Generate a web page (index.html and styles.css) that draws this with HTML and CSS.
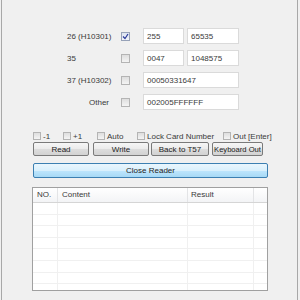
FILE: index.html
```html
<!DOCTYPE html>
<html lang="en">
<head>
  <meta charset="UTF-8" />
  <title>Card Reader</title>
  <link rel="stylesheet" href="styles.css">
</head>
<body>
  <div class="window">

    <div class="form">
      <div class="row">
        <span class="label">26 (H10301)</span>
        <span class="check checked">
          <svg width="7" height="7" viewBox="0 0 7 7"><polyline points="1,3.5 3,5.5 6,1" fill="none" stroke="#2a3a9a" stroke-width="1.2"/></svg>
        </span>
        <span class="field short">255</span>
        <span class="field long">65535</span>
      </div>
      <div class="row">
        <span class="label">35</span>
        <span class="check"></span>
        <span class="field short">0047</span>
        <span class="field long">1048575</span>
      </div>
      <div class="row">
        <span class="label">37 (H10302)</span>
        <span class="check"></span>
        <span class="field wide">00050331647</span>
      </div>
      <div class="row">
        <span class="label other">Other</span>
        <span class="check"></span>
        <span class="field wide">002005FFFFFF</span>
      </div>
    </div>

    <div class="options">
      <label class="opt opt-m1"><span class="check small"></span>-1</label>
      <label class="opt opt-p1"><span class="check small"></span>+1</label>
      <label class="opt opt-auto"><span class="check small"></span>Auto</label>
      <label class="opt opt-lock"><span class="check small"></span>Lock Card Number</label>
      <label class="opt"><span class="check small"></span>Out [Enter]</label>
    </div>

    <div class="buttons">
      <button class="btn btn-read">Read</button>
      <button class="btn btn-write">Write</button>
      <button class="btn btn-back">Back to T57</button>
      <button class="btn btn-kbd">Keyboard Out</button>
    </div>

    <button class="btn-close">Close Reader</button>

    <div class="list">
      <div class="list-head">
        <span class="col col-no">NO.</span>
        <span class="col col-content">Content</span>
        <span class="col col-result">Result</span>
        <span class="col col-end"></span>
      </div>
      <div class="list-body">
        <div class="list-row"><span class="col col-no"></span><span class="col col-content"></span><span class="col col-result"></span><span class="col col-end"></span></div>
        <div class="list-row"><span class="col col-no"></span><span class="col col-content"></span><span class="col col-result"></span><span class="col col-end"></span></div>
        <div class="list-row"><span class="col col-no"></span><span class="col col-content"></span><span class="col col-result"></span><span class="col col-end"></span></div>
        <div class="list-row"><span class="col col-no"></span><span class="col col-content"></span><span class="col col-result"></span><span class="col col-end"></span></div>
        <div class="list-row"><span class="col col-no"></span><span class="col col-content"></span><span class="col col-result"></span><span class="col col-end"></span></div>
        <div class="list-row"><span class="col col-no"></span><span class="col col-content"></span><span class="col col-result"></span><span class="col col-end"></span></div>
        <div class="list-row"><span class="col col-no"></span><span class="col col-content"></span><span class="col col-result"></span><span class="col col-end"></span></div>
        <div class="list-row"><span class="col col-no"></span><span class="col col-content"></span><span class="col col-result"></span><span class="col col-end"></span></div>
      </div>
    </div>

  </div>
</body>
</html>
```

FILE: styles.css
```css
* {
  box-sizing: border-box;
}
html, body {
  margin: 0;
  height: 100%;
  background: #f0f0f0;
}
body {
  font-family: "Liberation Sans", Arial, sans-serif;
  font-size: 8px;
  color: #3a3a3a;
  overflow: hidden;
}
.window {
  margin-left: 1px;
  width: 297px;
  height: 300px;
  border-left: 1px solid #a8a8a8;
  border-right: 1px solid #a8a8a8;
  display: flex;
  flex-direction: column;
}

/* format rows */
.form {
  padding: 28px 0 0 65px;
}
.row {
  display: flex;
  align-items: center;
  height: 16px;
  margin-bottom: 6px;
}
.label {
  width: 54px;
}
.label.other {
  padding-left: 22px;
}
.check {
  width: 9px;
  height: 9px;
  border: 1px solid #b4b4b4;
  background: linear-gradient(#dedede, #f4f4f4);
  display: flex;
  align-items: center;
  justify-content: center;
  flex-shrink: 0;
}
.check.checked {
  background: linear-gradient(#dce3f0, #f2f4fa);
  border-color: #97a2b8;
}
.row .check {
  margin-right: 13px;
}
.field {
  height: 16px;
  background: #fff;
  border: 1px solid #dadada;
  padding: 2px 0 0 3px;
  line-height: 11px;
}
.field.short {
  width: 41px;
}
.field.long {
  width: 52px;
  margin-left: 3px;
}
.field.wide {
  width: 96px;
}

/* options */
.options {
  display: flex;
  align-items: center;
  margin: 15px 0 0 31px;
  height: 10px;
}
.opt {
  display: flex;
  align-items: center;
  gap: 2px;
  white-space: nowrap;
}
.opt-m1 { width: 30px; }
.opt-p1 { width: 34px; }
.opt-auto { width: 40px; }
.opt-lock { width: 86px; }
.check.small {
  width: 8px;
  height: 8px;
}

/* buttons */
.buttons {
  display: flex;
  margin: 1px 0 0 31px;
}
.btn, .btn-close {
  font-family: inherit;
  font-size: 8px;
  color: #222;
  padding: 0;
  border-radius: 2px;
  white-space: nowrap;
}
.btn {
  height: 14px;
  border: 1px solid #7a7a7a;
  background: linear-gradient(#f6f6f6 0%, #ebebeb 50%, #dddddd 51%, #d2d2d2 100%);
}
.btn-read { width: 56px; }
.btn-write { width: 56px; margin-left: 4px; }
.btn-back { width: 58px; margin-left: 2px; }
.btn-kbd { width: 51px; margin-left: 3px; font-size: 7.6px; }

.btn-close {
  margin: 7px 0 0 31px;
  width: 235px;
  height: 15px;
  border: 1px solid #3c7fb1;
  background: linear-gradient(#eaf6fd 0%, #d9f0fc 50%, #bee6fd 51%, #a7d9f5 100%);
}

/* result list */
.list {
  margin: 9px 0 0 30px;
  width: 236px;
  height: 104px;
  border: 1px solid #a0a0a0;
  background: #fff;
  overflow: hidden;
}
.list-head {
  display: flex;
  height: 15px;
  background: linear-gradient(#ffffff, #f3f4f6);
  border-bottom: 1px solid #d5d5d5;
}
.list-head .col {
  line-height: 14px;
  padding-left: 4px;
  border-right: 1px solid #e3e4e6;
}
.col {
  flex-shrink: 0;
  height: 100%;
}
.col-no { width: 25px; }
.col-content { width: 130px; }
.col-result { width: 66px; }
.col-end { width: 13px; border-right: none !important; }
.list-head .col-result { padding-left: 3px; }
.list-row {
  display: flex;
  height: 11.6px;
  border-bottom: 1px solid #f0f0f0;
}
.list-row .col {
  border-right: 1px solid #f0f0f0;
}
```
